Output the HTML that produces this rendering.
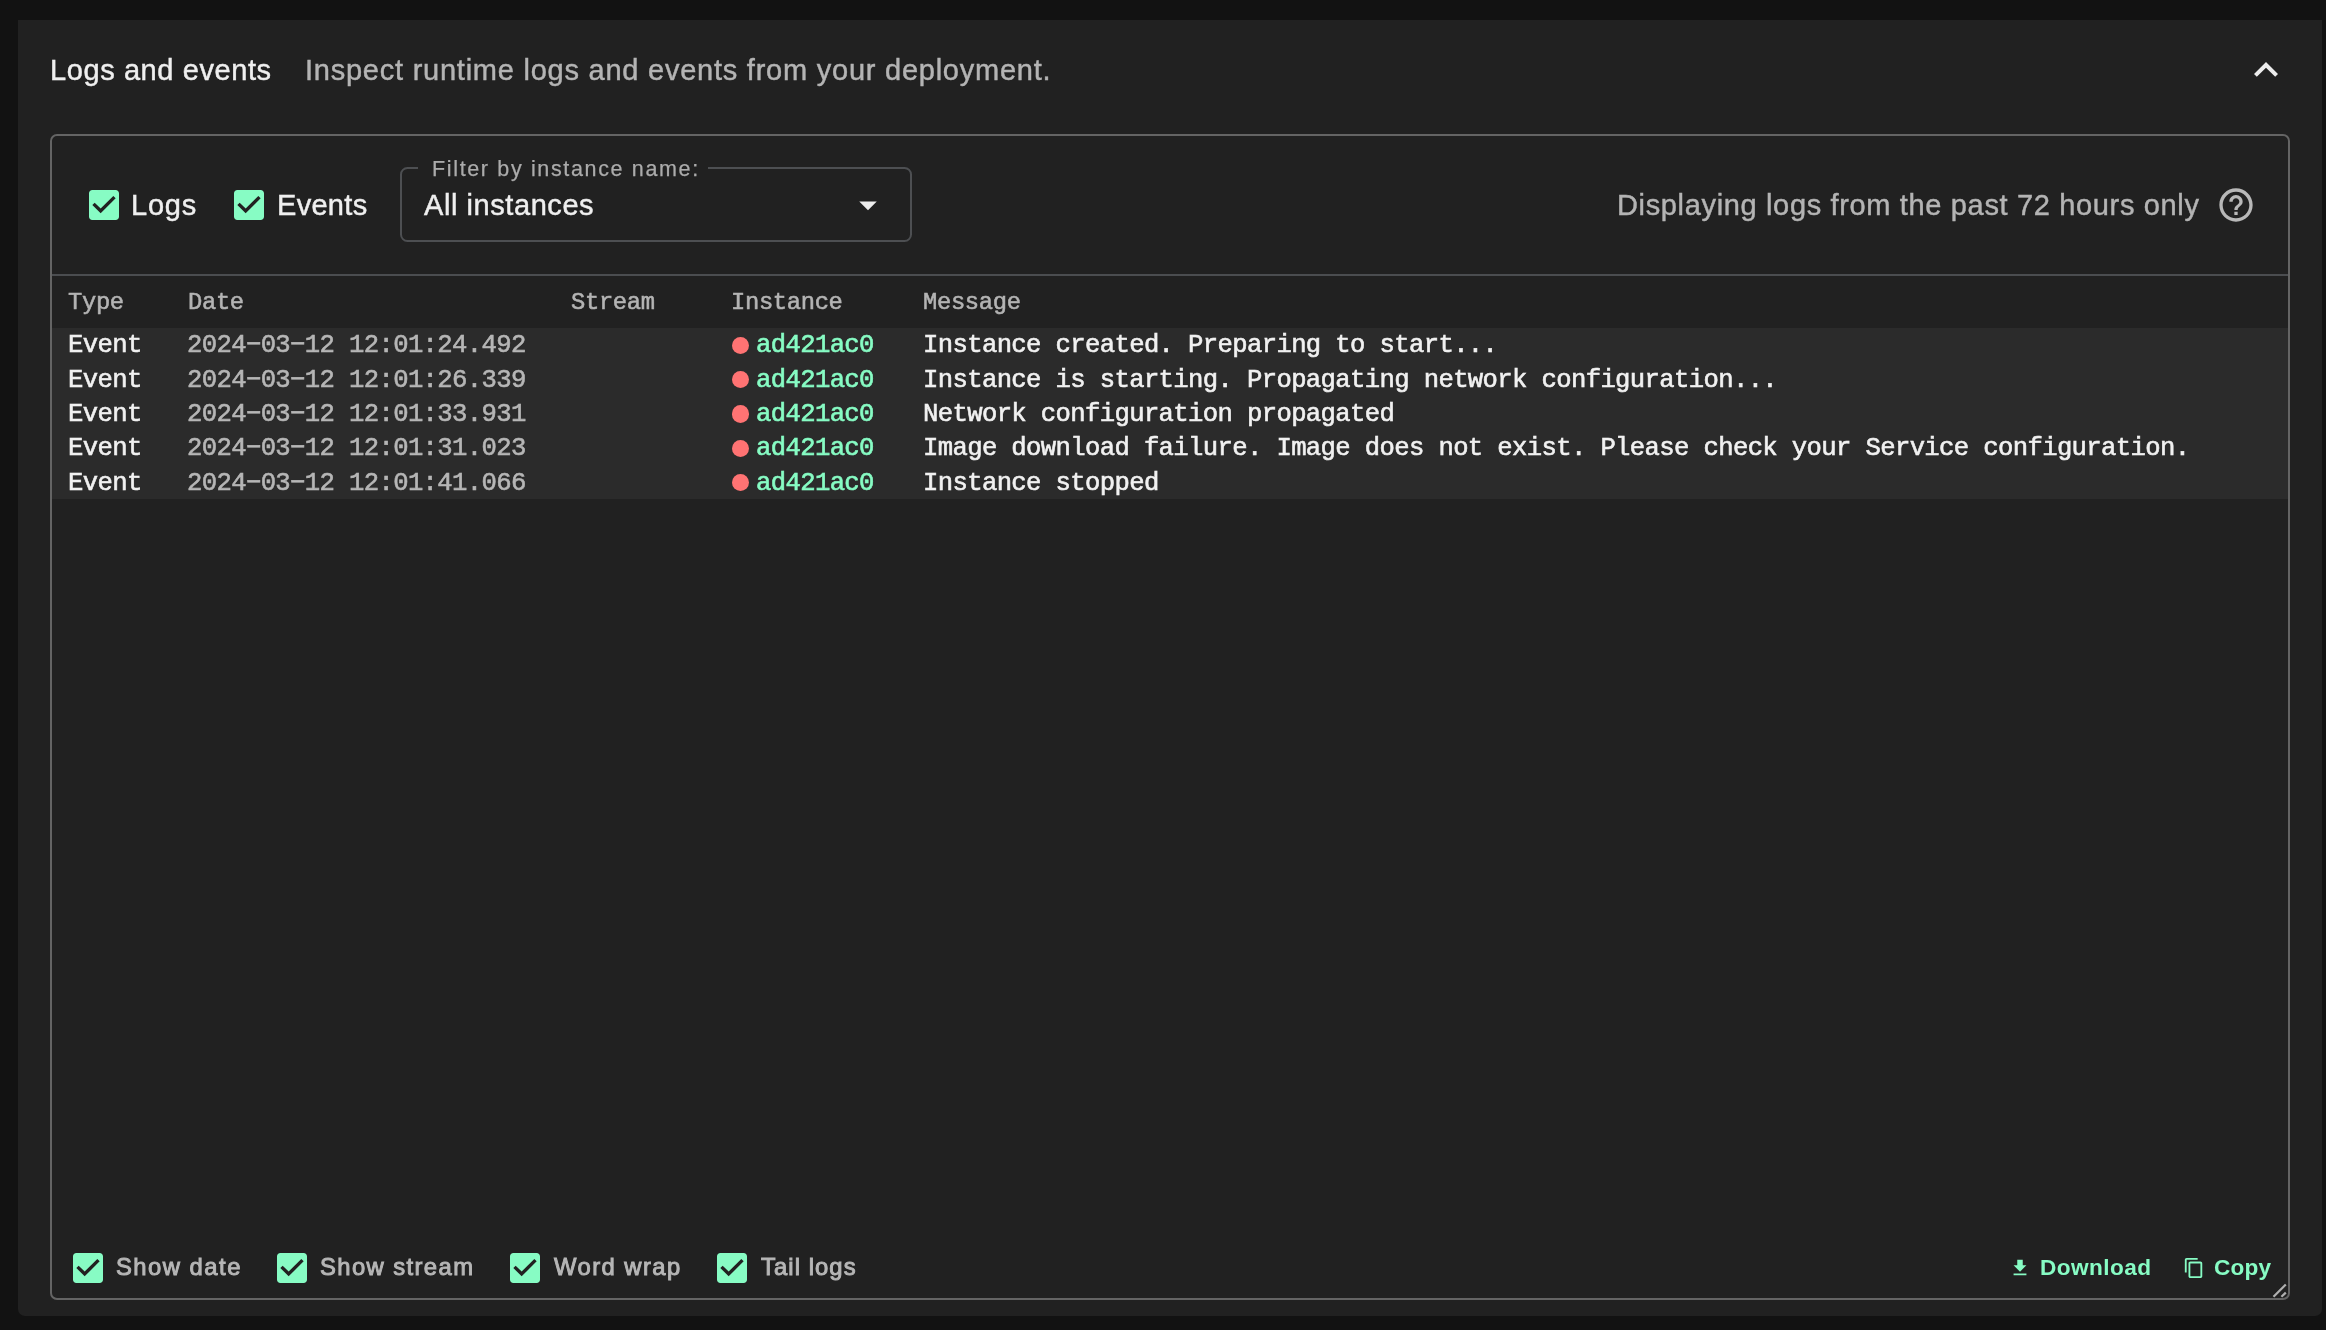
<!DOCTYPE html>
<html lang="en">
<head>
<meta charset="utf-8">
<meta name="viewport" content="width=2326">
<title>Logs and events</title>
<style>
html,body{margin:0;padding:0;}
body{width:2326px;height:1330px;background:#121212;overflow:hidden;position:relative;font-family:"Liberation Sans",sans-serif;}
.abs{position:absolute;}
.card{left:18px;top:20px;width:2304px;height:1296px;background:#212121;border-radius:0 0 7px 7px;}
.box{left:50px;top:134px;width:2240px;height:1166px;box-sizing:border-box;border:2px solid #646464;border-radius:7px;}
.divider{left:52px;top:274px;width:2236px;height:2px;background:#4b4d50;}
.rowsbg{left:52px;top:328px;width:2236px;height:171.3px;background:#2b2b2b;}
.t{position:absolute;white-space:pre;line-height:1;margin:0;will-change:transform;}
.s28{font-size:29px;}
.title{color:#efefef;-webkit-text-stroke:0.45px #efefef;}
.sub{color:#b4b4b4;-webkit-text-stroke:0.45px #b4b4b4;}
.lbl{color:#efefef;-webkit-text-stroke:0.45px #efefef;}
.mono{font-family:"Liberation Mono",monospace;}
.hd{font-size:23.8px;letter-spacing:-0.34px;color:#b4b4b4;-webkit-text-stroke:0.55px #b4b4b4;}
.rw{font-size:25.6px;letter-spacing:-0.633px;}
.w{color:#f1f1f1;-webkit-text-stroke:0.6px #f1f1f1;}
.g{color:#b6b6b6;-webkit-text-stroke:0.6px #b6b6b6;}
.m{color:#87fcc4;-webkit-text-stroke:0.6px #87fcc4;}
.sel{left:400px;top:167px;width:512px;height:75px;box-sizing:border-box;border:2px solid #4d4f52;border-radius:7.5px;}
.selgap{left:418px;top:166px;width:290px;height:4px;background:#212121;}
.dot{width:17.4px;height:17.4px;border-radius:50%;background:#ff7373;}
.opt{font-size:23.8px;color:#b6b6b6;-webkit-text-stroke:0.95px #b6b6b6;}
.btn{font-size:22.6px;color:#87fcc4;font-weight:bold;}
svg{position:absolute;display:block;overflow:visible;}
</style>
</head>
<body>
<div class="abs card"></div>

<!-- header -->
<div class="t s28 title" id="t1" style="letter-spacing:0.592px;left:49.90px;top:55.60px;">Logs and events</div>
<div class="t s28 sub" id="t2" style="letter-spacing:0.761px;left:305.30px;top:55.60px;">Inspect runtime logs and events from your deployment.</div>
<svg id="chev" style="left:2242px;top:46px;" width="48" height="48" viewBox="0 0 24 24"><path fill="#ededed" d="m12 8-6 6 1.41 1.41L12 10.83l4.59 4.58L18 14z"/></svg>

<div class="abs box"></div>
<div class="abs divider"></div>
<div class="abs rowsbg"></div>

<!-- toolbar -->
<svg id="cb1" style="left:84px;top:185px;" width="40" height="40" viewBox="0 0 24 24"><path fill="#87fcc4" d="M19 3H5c-1.11 0-2 .9-2 2v14c0 1.1.89 2 2 2h14c1.11 0 2-.9 2-2V5c0-1.1-.89-2-2-2zm-9 14l-5-5 1.41-1.41L10 14.17l7.59-7.59L19 8l-9 9z"/></svg>
<div class="t s28 lbl" id="t3" style="letter-spacing:0.767px;left:131.00px;top:190.60px;">Logs</div>
<svg id="cb2" style="left:229px;top:185px;" width="40" height="40" viewBox="0 0 24 24"><path fill="#87fcc4" d="M19 3H5c-1.11 0-2 .9-2 2v14c0 1.1.89 2 2 2h14c1.11 0 2-.9 2-2V5c0-1.1-.89-2-2-2zm-9 14l-5-5 1.41-1.41L10 14.17l7.59-7.59L19 8l-9 9z"/></svg>
<div class="t s28 lbl" id="t4" style="letter-spacing:0.300px;left:276.50px;top:190.60px;">Events</div>

<!-- select -->
<div class="abs sel"></div>
<div class="abs selgap"></div>
<div class="t" id="t5" style="letter-spacing:1.647px;left:432.20px;top:158.92px;font-size:21.5px;color:#ababab;-webkit-text-stroke:0.25px #ababab;">Filter by instance name:</div>
<div class="t s28 lbl" id="t6" style="letter-spacing:0.567px;left:424.10px;top:190.60px;">All instances</div>
<svg id="dd" style="left:847px;top:183.5px;" width="42" height="42" viewBox="0 0 24 24"><path fill="#ededed" d="M7 10l5 5 5-5z"/></svg>

<div class="t s28 sub" id="t7" style="letter-spacing:0.652px;left:1616.90px;top:190.60px;">Displaying logs from the past 72 hours only</div>
<svg id="help" style="left:2216px;top:185px;" width="40" height="40" viewBox="0 0 24 24"><path fill="#b8b8b8" d="M11 18h2v-2h-2v2zm1-16C6.480 2 2 6.480 2 12s4.480 10 10 10 10-4.480 10-10S17.520 2 12 2zm0 18c-4.410 0-8-3.590-8-8s3.590-8 8-8 8 3.590 8 8-3.590 8-8 8zm0-14c-2.210 0-4 1.790-4 4h2c0-1.100.9-2 2-2s2 .9 2 2c0 2-3 1.750-3 5h2c0-2.250 3-2.500 3-5 0-2.210-1.790-4-4-4z"/></svg>

<!-- table header -->
<div class="t mono hd" id="h1" style="left:68.40px;top:290.96px;">Type</div>
<div class="t mono hd" id="h2" style="left:187.90px;top:290.96px;">Date</div>
<div class="t mono hd" id="h3" style="left:571.30px;top:290.96px;">Stream</div>
<div class="t mono hd" id="h4" style="left:731.00px;top:290.96px;">Instance</div>
<div class="t mono hd" id="h5" style="left:922.80px;top:290.96px;">Message</div>

<!-- rows -->
<div class="t mono rw w" style="left:68px;top:333.16px;">Event</div><div class="t mono rw g" style="left:187px;top:333.16px;">2024−03−12 12:01:24.492</div><div class="abs dot" style="left:731.8px;top:336.70px;"></div><div class="t mono rw m" style="left:756px;top:333.16px;">ad421ac0</div><div class="t mono rw w" style="left:923px;top:333.16px;">Instance created. Preparing to start...</div>
<div class="t mono rw w" style="left:68px;top:367.51px;">Event</div><div class="t mono rw g" style="left:187px;top:367.51px;">2024−03−12 12:01:26.339</div><div class="abs dot" style="left:731.8px;top:371.05px;"></div><div class="t mono rw m" style="left:756px;top:367.51px;">ad421ac0</div><div class="t mono rw w" style="left:923px;top:367.51px;">Instance is starting. Propagating network configuration...</div>
<div class="t mono rw w" style="left:68px;top:401.86px;">Event</div><div class="t mono rw g" style="left:187px;top:401.86px;">2024−03−12 12:01:33.931</div><div class="abs dot" style="left:731.8px;top:405.40px;"></div><div class="t mono rw m" style="left:756px;top:401.86px;">ad421ac0</div><div class="t mono rw w" style="left:923px;top:401.86px;">Network configuration propagated</div>
<div class="t mono rw w" style="left:68px;top:436.21px;">Event</div><div class="t mono rw g" style="left:187px;top:436.21px;">2024−03−12 12:01:31.023</div><div class="abs dot" style="left:731.8px;top:439.75px;"></div><div class="t mono rw m" style="left:756px;top:436.21px;">ad421ac0</div><div class="t mono rw w" style="left:923px;top:436.21px;">Image download failure. Image does not exist. Please check your Service configuration.</div>
<div class="t mono rw w" style="left:68px;top:470.56px;">Event</div><div class="t mono rw g" style="left:187px;top:470.56px;">2024−03−12 12:01:41.066</div><div class="abs dot" style="left:731.8px;top:474.10px;"></div><div class="t mono rw m" style="left:756px;top:470.56px;">ad421ac0</div><div class="t mono rw w" style="left:923px;top:470.56px;">Instance stopped</div>

<!-- footer -->
<svg style="left:68px;top:1248px;" width="40" height="40" viewBox="0 0 24 24"><path fill="#87fcc4" d="M19 3H5c-1.11 0-2 .9-2 2v14c0 1.1.89 2 2 2h14c1.11 0 2-.9 2-2V5c0-1.1-.89-2-2-2zm-9 14l-5-5 1.41-1.41L10 14.17l7.59-7.59L19 8l-9 9z"/></svg><div class="t opt" id="o0" style="letter-spacing:1.493px;left:115.80px;top:1255.45px;">Show date</div>
<svg style="left:272px;top:1248px;" width="40" height="40" viewBox="0 0 24 24"><path fill="#87fcc4" d="M19 3H5c-1.11 0-2 .9-2 2v14c0 1.1.89 2 2 2h14c1.11 0 2-.9 2-2V5c0-1.1-.89-2-2-2zm-9 14l-5-5 1.41-1.41L10 14.17l7.59-7.59L19 8l-9 9z"/></svg><div class="t opt" id="o1" style="letter-spacing:1.410px;left:319.70px;top:1255.45px;">Show stream</div>
<svg style="left:505px;top:1248px;" width="40" height="40" viewBox="0 0 24 24"><path fill="#87fcc4" d="M19 3H5c-1.11 0-2 .9-2 2v14c0 1.1.89 2 2 2h14c1.11 0 2-.9 2-2V5c0-1.1-.89-2-2-2zm-9 14l-5-5 1.41-1.41L10 14.17l7.59-7.59L19 8l-9 9z"/></svg><div class="t opt" id="o2" style="letter-spacing:1.450px;left:553.70px;top:1255.45px;">Word wrap</div>
<svg style="left:712px;top:1248px;" width="40" height="40" viewBox="0 0 24 24"><path fill="#87fcc4" d="M19 3H5c-1.11 0-2 .9-2 2v14c0 1.1.89 2 2 2h14c1.11 0 2-.9 2-2V5c0-1.1-.89-2-2-2zm-9 14l-5-5 1.41-1.41L10 14.17l7.59-7.59L19 8l-9 9z"/></svg><div class="t opt" id="o3" style="letter-spacing:1.075px;left:761.30px;top:1255.45px;">Tail logs</div>
<svg id="dl" style="left:2009.3px;top:1257px;" width="22" height="22" viewBox="0 0 24 24"><path fill="#87fcc4" d="M19 9h-4V3H9v6H5l7 7 7-7zM5 18v2h14v-2H5z"/></svg>
<div class="t btn" id="b1" style="letter-spacing:0.431px;left:2039.90px;top:1256.9px;">Download</div>
<svg id="cp" style="left:2183px;top:1257px;" width="22" height="22" viewBox="0 0 24 24"><path fill="#87fcc4" d="M16 1H4c-1.100 0-2 .9-2 2v14h2V3h12V1zm3 4H8c-1.100 0-2 .9-2 2v14c0 1.100.9 2 2 2h11c1.100 0 2-.9 2-2V7c0-1.100-.9-2-2-2zm0 16H8V7h11v14z"/></svg>
<div class="t btn" id="b2" style="letter-spacing:0.196px;left:2213.70px;top:1256.9px;">Copy</div>
<svg id="rs" style="left:2268px;top:1280px;" width="20" height="20" viewBox="0 0 20 20"><path d="M5.500 16.800L17.800 4.500M13.400 16.800L17.800 12.600" stroke="#b0b0b0" stroke-width="2.200" fill="none"/></svg>

</body>
</html>
